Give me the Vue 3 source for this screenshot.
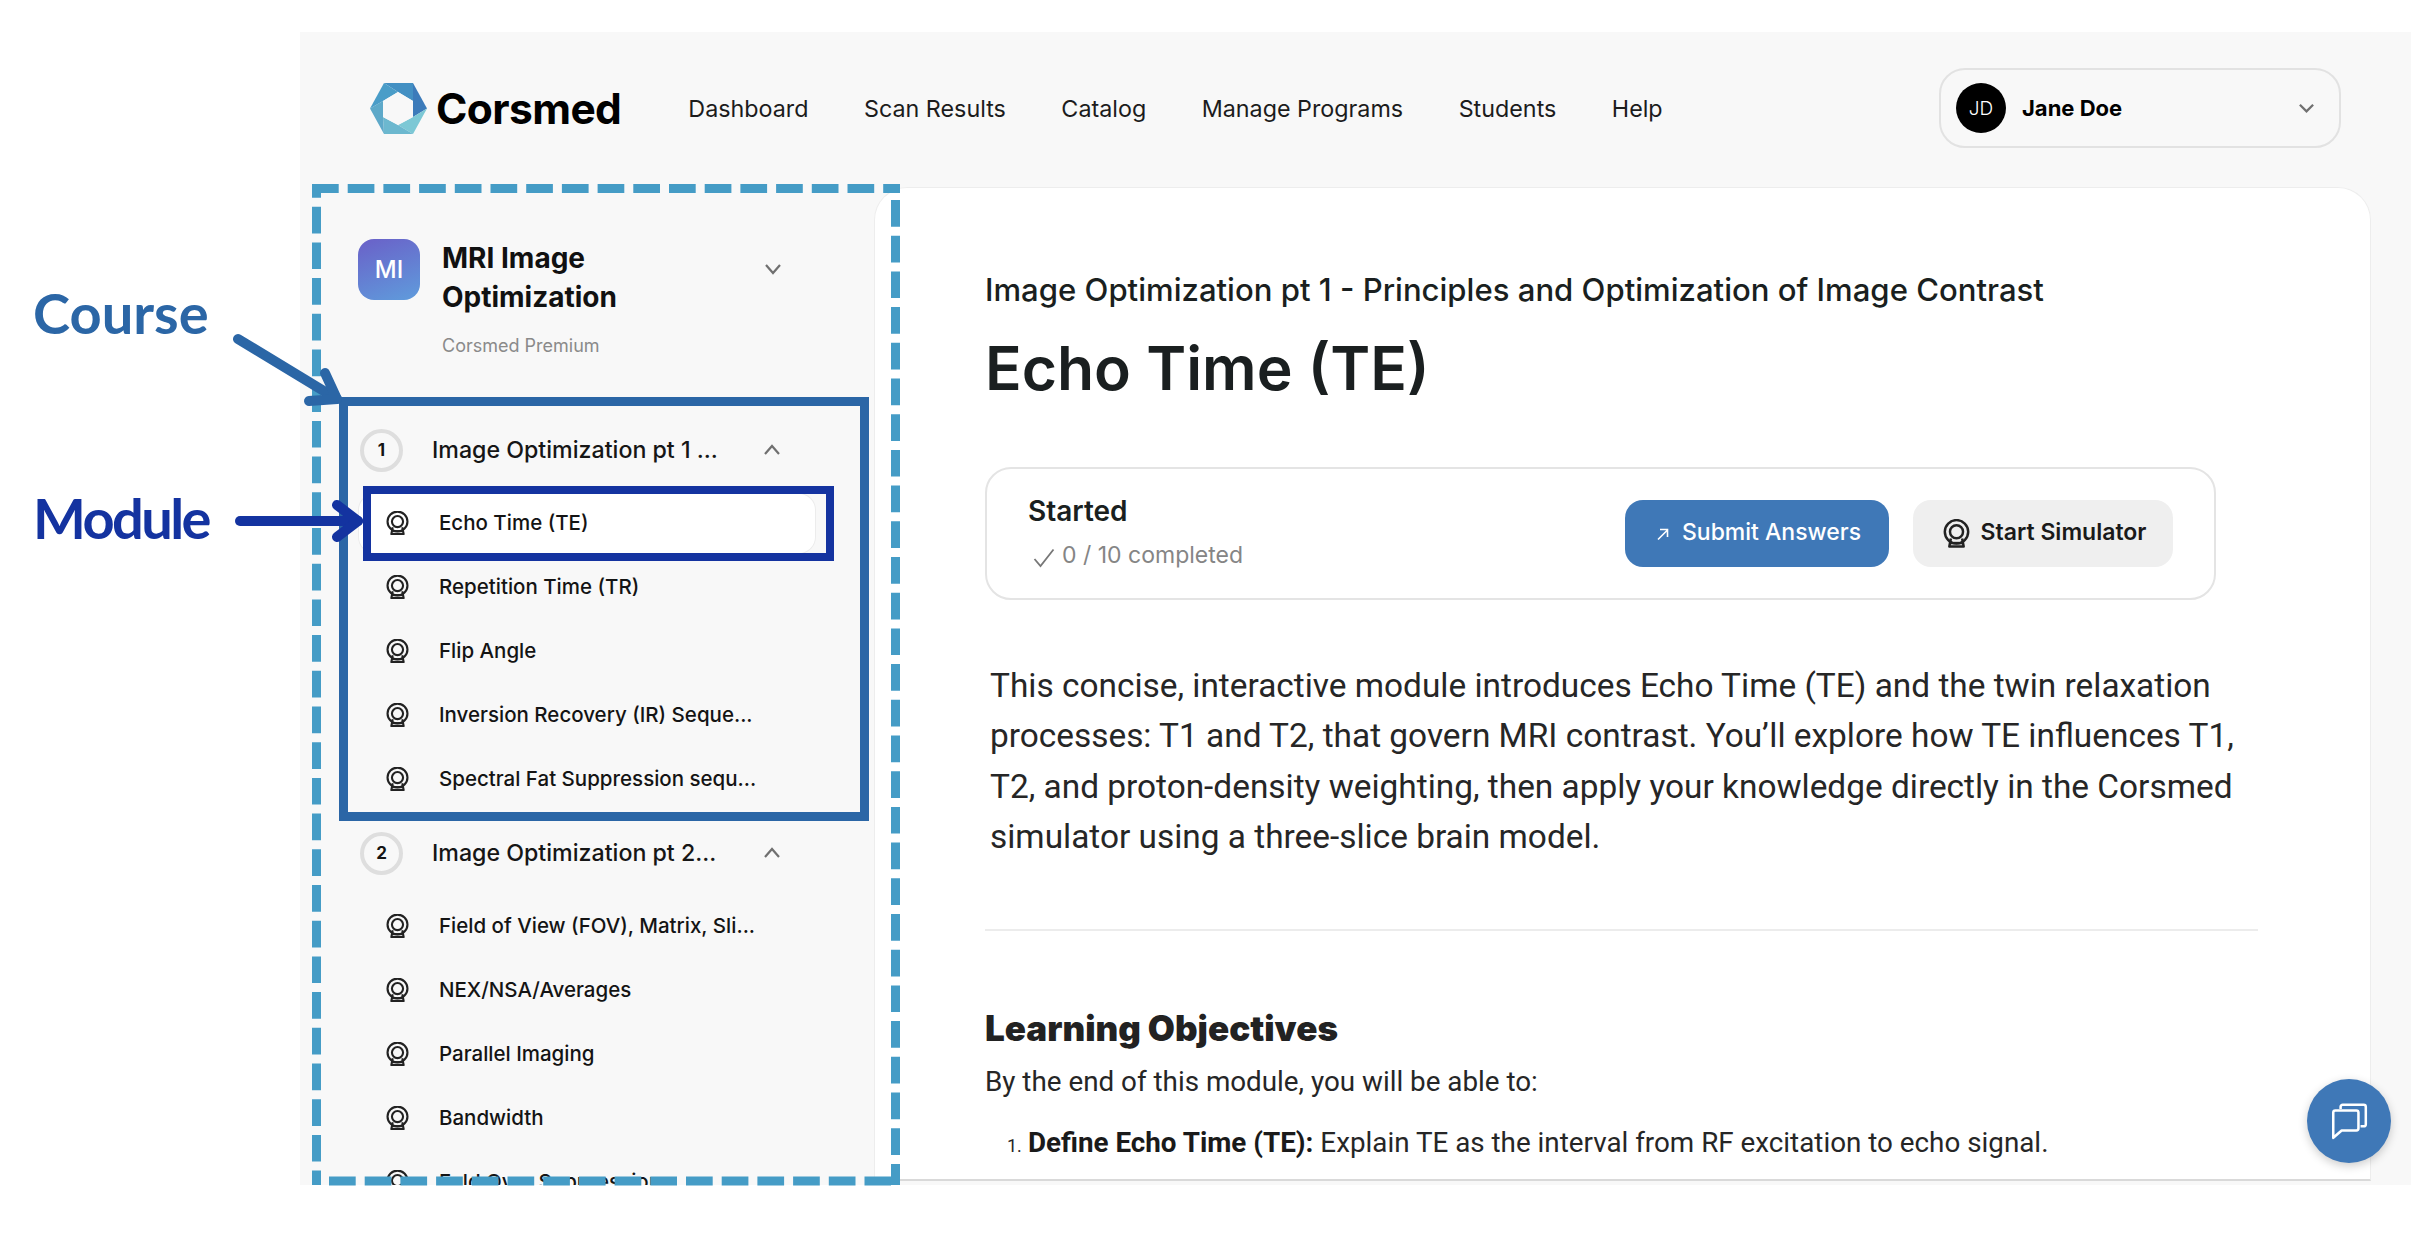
<script setup>
const nav = ['Dashboard', 'Scan Results', 'Catalog', 'Manage Programs', 'Students', 'Help']
const modules = [
  {
    n: 1,
    title: 'Image Optimization pt 1 ...',
    items: ['Echo Time (TE)', 'Repetition Time (TR)', 'Flip Angle', 'Inversion Recovery (IR) Seque...', 'Spectral Fat Suppression sequ...']
  },
  {
    n: 2,
    title: 'Image Optimization pt 2...',
    items: ['Field of View (FOV), Matrix, Sli...', 'NEX/NSA/Averages', 'Parallel Imaging', 'Bandwidth', 'Fold Over Suppression']
  }
]
</script>

<template>
  <div class="page">
    <svg class="defs" width="0" height="0" aria-hidden="true">
      <symbol id="mri" viewBox="0 0 24 25">
        <circle cx="12" cy="11" r="10.4" fill="none" stroke="currentColor" stroke-width="2.2" />
        <circle cx="12" cy="11" r="5.8" fill="none" stroke="currentColor" stroke-width="2.2" />
        <path d="M7 17 L5.6 24 H18.4 L17 17" fill="none" stroke="currentColor" stroke-width="2.2" stroke-linejoin="round" />
        <path d="M6.5 21 H17.5" stroke="currentColor" stroke-width="2.2" />
      </symbol>
    </svg>

    <div class="app">
      <header class="header">
        <div class="logo">
          <svg class="logo-mark" viewBox="0 0 57 51">
            <polygon points="14,0 43,0 43,18 28,9" fill="#4390c3" />
            <polygon points="43,0 57,25.5 43,34 43,18" fill="#3c7bba" />
            <polygon points="57,25.5 43,51 28,42 43,34" fill="#7cc8d5" />
            <polygon points="43,51 14,51 13,34 28,42" fill="#6cb8cf" />
            <polygon points="14,51 0,25.5 13,18 13,34" fill="#5ea9c9" />
            <polygon points="0,25.5 14,0 28,9 13,18" fill="#4a9dc8" />
            <polygon points="28,9 43,18 43,34 28,42 13,34 13,18" fill="#f8f8f8" />
          </svg>
          <span class="logo-text">Corsmed</span>
        </div>
        <nav class="nav">
          <a v-for="item in nav" :key="item" class="nav-link">{{ item }}</a>
        </nav>
        <div class="user">
          <span class="avatar">JD</span>
          <span class="user-name">Jane Doe</span>
          <svg class="user-chev" viewBox="0 0 18 12"><path d="M2 2.5 L9 9.5 L16 2.5" fill="none" stroke="#707070" stroke-width="2.4" /></svg>
        </div>
      </header>

      <div class="main">
        <aside class="sidebar">
          <div class="course">
            <div class="tile">MI</div>
            <div class="course-text">
              <div class="course-title">MRI Image<br />Optimization</div>
              <div class="course-sub">Corsmed Premium</div>
            </div>
            <svg class="course-chev" viewBox="0 0 18 12"><path d="M2 2 L9 10 L16 2" fill="none" stroke="#707070" stroke-width="2.2" /></svg>
          </div>

          <section v-for="m in modules" :key="m.n" class="module">
            <div class="module-head">
              <span class="num">{{ m.n }}</span>
              <span class="module-title">{{ m.title }}</span>
              <svg class="module-chev" viewBox="0 0 18 12"><path d="M2 10 L9 2 L16 10" fill="none" stroke="#707070" stroke-width="2.2" /></svg>
            </div>
            <ul class="items">
              <li v-for="(it, i) in m.items" :key="it" class="item">
                <div class="item-box" :class="{ active: m.n === 1 && i === 0 }">
                  <svg class="item-icon"><use href="#mri" /></svg>
                  <span class="item-label">{{ it }}</span>
                </div>
              </li>
            </ul>
          </section>
        </aside>

        <main class="card">
          <div class="subtitle">Image Optimization pt 1 - Principles and Optimization of Image Contrast</div>
          <h1 class="title">Echo Time (TE)</h1>

          <div class="status">
            <div class="status-text">
              <div class="status-label">Started</div>
              <div class="status-count">
                <svg class="check" viewBox="0 0 22 20"><path d="M1.5 11 L7.5 18 L20.5 1.5" fill="none" stroke="#777" stroke-width="1.8" /></svg>
                0 / 10 completed
              </div>
            </div>
            <button class="btn primary">
              <svg class="btn-arrow" viewBox="0 0 14 14"><path d="M2 12.5 L11.5 3 M4 2.5 H11.5 V10" fill="none" stroke="#fff" stroke-width="1.6" /></svg>
              Submit Answers
            </button>
            <button class="btn secondary">
              <svg class="btn-mri"><use href="#mri" /></svg>
              Start Simulator
            </button>
          </div>

          <p class="intro">This concise, interactive module introduces Echo Time (TE) and the twin relaxation processes: T1 and T2, that govern MRI contrast. You’ll explore how TE influences T1, T2, and proton-density weighting, then apply your knowledge directly in the Corsmed simulator using a three-slice brain model.</p>

          <hr class="divider" />

          <h2 class="objectives">Learning Objectives</h2>
          <p class="lead">By the end of this module, you will be able to:</p>
          <div class="objective">
            <span class="marker">1.</span>
            <span><strong>Define Echo Time (TE):</strong> Explain TE as the interval from RF excitation to echo signal.</span>
          </div>
        </main>
      </div>

      <button class="chat" aria-label="Chat">
        <svg viewBox="0 0 40 40" width="42" height="42">
          <path d="M12 8.5 V6.5 A2 2 0 0 1 14 4.5 H34 A2 2 0 0 1 36 6.5 V23 A2 2 0 0 1 34 25 H31" fill="none" stroke="#fff" stroke-width="2.4" />
          <path d="M5 12 A2 2 0 0 1 7 10 H27 A2 2 0 0 1 29 12 V27 A2 2 0 0 1 27 29 H13 L5 36 Z" fill="none" stroke="#fff" stroke-width="2.4" stroke-linejoin="round" />
        </svg>
      </button>
    </div>

    <svg class="overlay" width="2414" height="1242" viewBox="0 0 2414 1242">
      <g fill="none" stroke="#459cc6" stroke-width="9" stroke-dasharray="26.7 9">
        <line x1="312" y1="188.5" x2="900" y2="188.5" />
        <line x1="316.5" y1="184" x2="316.5" y2="1185" stroke-dashoffset="13" />
        <line x1="895.5" y1="200" x2="895.5" y2="1185" />
        <line x1="329" y1="1181" x2="891" y2="1181" />
      </g>
      <rect x="343.5" y="401.5" width="521" height="415" fill="none" stroke="#2b66a6" stroke-width="9" />
      <rect x="367" y="490" width="463" height="67" fill="none" stroke="#1433a0" stroke-width="8" />
      <g fill="none" stroke="#2b66a6" stroke-width="10" stroke-linecap="round" stroke-linejoin="round">
        <path d="M238 339 L337 399" />
        <path d="M325 373 L337 399 L309 401" />
      </g>
      <g fill="none" stroke="#1433a0" stroke-width="10" stroke-linecap="round" stroke-linejoin="round">
        <path d="M240 521 H358" />
        <path d="M337 505 L358 521 L337 537" />
      </g>
    </svg>
    <div class="note note-course">Course</div>
    <div class="note note-module">Module</div>
  </div>
</template>

<style>
html, body { margin: 0; background: #fff; }
</style>

<style scoped>
.page {
  position: relative;
  width: 2414px;
  height: 1242px;
  overflow: hidden;
  background: #fff;
  font-family: Inter, "Noto Sans", sans-serif;
  color: #141414;
}
.defs { position: absolute; }
.app {
  position: relative;
  margin-left: 300px;
  top: 32px;
  width: 2111px;
  height: 1153px;
  background: #f8f8f8;
  display: flex;
  flex-direction: column;
  overflow: hidden;
}
.header {
  height: 155px;
  flex: none;
  box-sizing: border-box;
  padding: 0 70px 3px 70px;
  display: flex;
  align-items: center;
}
.logo { display: flex; align-items: center; gap: 9px; }
.logo-mark { width: 57px; height: 51px; }
.logo-text { font-size: 42.5px; font-weight: 700; color: #000; letter-spacing: -0.6px; }
.nav { display: flex; gap: 55.5px; margin-left: 67px; }
.nav-link { font-size: 23.3px; color: #1c1c1c; }
.user {
  margin-left: auto;
  width: 402px;
  height: 80px;
  box-sizing: border-box;
  border: 2px solid #e2e2e2;
  border-radius: 26px;
  padding: 0 24px 0 15px;
  display: flex;
  align-items: center;
}
.avatar {
  width: 50px;
  height: 50px;
  border-radius: 50%;
  background: #000;
  color: #fff;
  font-size: 19px;
  font-weight: 300;
  display: flex;
  align-items: center;
  justify-content: center;
}
.user-name { margin-left: 16px; font-size: 22px; font-weight: 700; color: #000; }
.user-chev { margin-left: auto; width: 17px; height: 12px; }

.main { flex: 1; display: flex; min-height: 0; }
.sidebar { width: 574px; flex: none; overflow: hidden; }
.course {
  height: 231px;
  box-sizing: border-box;
  padding: 52px 92px 0 58px;
  display: flex;
  align-items: flex-start;
}
.tile {
  width: 62px;
  height: 61px;
  border-radius: 16px;
  flex: none;
  background: linear-gradient(160deg, #6a60c8, #5f9cdc);
  color: #fff;
  font-size: 24px;
  font-weight: 500;
  display: flex;
  align-items: center;
  justify-content: center;
}
.course-text { margin-left: 22px; flex: 1; }
.course-title { font-size: 28px; line-height: 38.6px; font-weight: 700; color: #111; }
.course-sub { margin-top: 18px; font-size: 18px; line-height: 24px; color: #8a8a8a; }
.course-chev { width: 18px; height: 12px; margin-top: 24px; }

.module { margin-bottom: 10px; }
.module-head {
  height: 64px;
  display: flex;
  align-items: center;
  padding-left: 60px;
}
.num {
  width: 43px;
  height: 43px;
  box-sizing: border-box;
  border: 4px solid #dedede;
  border-radius: 50%;
  flex: none;
  font-size: 17px;
  font-weight: 700;
  display: flex;
  align-items: center;
  justify-content: center;
}
.module-title { margin-left: 29px; width: 331px; font-size: 23.2px; color: #161616; font-weight: 500; white-space: nowrap; }
.module-chev { width: 18px; height: 12px; }
.items { list-style: none; margin: 9px 0 0; padding: 0; }
.item { height: 64px; display: flex; align-items: center; padding-left: 59px; }
.item-box {
  width: 456px;
  height: 59px;
  box-sizing: border-box;
  border-radius: 16px;
  padding-left: 27px;
  display: flex;
  align-items: center;
  font-size: 20.5px;
  font-weight: 500;
  color: #141414;
  white-space: nowrap;
}
.item-label { padding-bottom: 2px; }
.item-box.active { background: #fff; box-shadow: 0 0 0 1px #ececec; }
.item-icon { width: 23px; height: 24px; margin-right: 30px; flex: none; color: #222; }

.card {
  flex: 1;
  margin: 0 40px 4px 0;
  box-sizing: border-box;
  background: #fff;
  border: 1px solid #ededed;
  border-bottom: 2px solid #d9d9d9;
  border-radius: 33px 33px 0 0;
  padding: 82px 0 0 110px;
  overflow: hidden;
}
.subtitle { font-size: 31.1px; line-height: 40px; font-weight: 500; color: #1a1f20; white-space: nowrap; }
.title { margin: 23px 0 0; font-size: 60.6px; line-height: 70px; font-weight: 600; color: #1a1f20; }
.status {
  margin-top: 64px;
  width: 1231px;
  height: 133px;
  box-sizing: border-box;
  border: 2px solid #e4e4e4;
  border-radius: 26px;
  padding: 0 41px;
  display: flex;
  align-items: center;
  gap: 24px;
}
.status-text { flex: 1; }
.status-label { font-size: 28px; line-height: 36px; font-weight: 600; color: #1a1f20; margin-top: -3px; }
.status-count { margin-top: 10px; font-size: 23px; line-height: 32px; color: #858585; display: flex; align-items: center; gap: 7px; margin-left: 5px; }
.check { width: 22px; height: 20px; margin-top: 6px; }
.btn {
  height: 67px;
  border: 0;
  border-radius: 18px;
  font-family: inherit;
  font-size: 23px;
  font-weight: 500;
  display: flex;
  align-items: center;
  justify-content: center;
  padding: 0 0 3px 3px;
  box-sizing: border-box;
}
.btn.primary { width: 264px; background: #3f78b7; color: #fff; gap: 12px; }
.btn.secondary { width: 260px; background: #efefef; color: #1a1a1a; gap: 11px; font-weight: 600; }
.btn-arrow { width: 14px; height: 14px; margin-top: 3px; }
.btn-mri { width: 27px; height: 29px; color: #222; margin-top: 3px; }

.intro {
  margin: 61px 0 0 5px;
  width: 1260px;
  font-family: Roboto, sans-serif;
  font-size: 33.4px;
  line-height: 50.3px;
  color: #262626;
}
.divider { margin: 67px 0 0; width: 1273px; height: 2px; border: 0; background: #ececec; }
.objectives { margin: 74px 0 0; font-size: 35px; line-height: 46px; font-weight: 900; color: #222; }
.lead { margin: 11px 0 0; font-family: Roboto, sans-serif; font-size: 27.8px; line-height: 40px; color: #262626; }
.objective {
  margin: 21px 0 0 22px;
  display: flex;
  align-items: baseline;
  gap: 6px;
  font-family: Roboto, sans-serif;
  font-size: 27.8px;
  line-height: 40px;
  color: #262626;
}
.marker { font-size: 18px; }
.objective strong { font-weight: 700; color: #1a1a1a; }

.chat {
  position: absolute;
  left: 2007px;
  top: 1047px;
  width: 84px;
  height: 84px;
  border: 0;
  padding: 0;
  border-radius: 50%;
  background: #3f78b7;
  box-shadow: 0 3px 10px rgba(0, 0, 0, 0.2);
  display: flex;
  align-items: center;
  justify-content: center;
}
.overlay { position: absolute; left: 0; top: 0; pointer-events: none; }
.note {
  position: absolute;
  left: 33px;
  font-family: Lato, sans-serif;
  font-size: 56px;
  line-height: 60px;
  font-weight: 700;
}
.note-course { top: 283px; color: #2b66a6; }
.note-module { top: 488px; color: #1433a0; letter-spacing: -2.6px; }
</style>
